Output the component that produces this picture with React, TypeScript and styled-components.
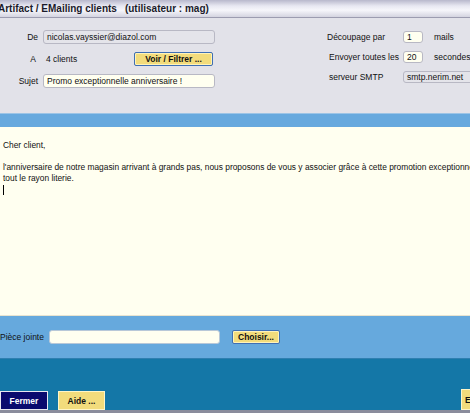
import React from "react";
import styled, { createGlobalStyle } from "styled-components";

const Global = createGlobalStyle`
  html, body {
    margin: 0;
    padding: 0;
    overflow: hidden;
  }
  body {
    font-family: "Liberation Sans", Arial, sans-serif;
    font-size: 8.5px;
    color: #111;
  }
`;

const Window = styled.div`
  width: 470px;
  height: 413px;
  display: flex;
  flex-direction: column;
  overflow: hidden;
  background: #e2e2e9;
`;

const TitleBar = styled.div`
  height: 18px;
  flex: none;
  box-sizing: border-box;
  display: flex;
  align-items: center;
  gap: 8px;
  margin-left: -2px;
  padding-bottom: 1px;
  font-size: 10px;
  font-weight: bold;
  color: #1a1a2a;
  background: linear-gradient(to bottom, #b8b8cc 0%, #e8e8f2 35%, #f6f6fb 60%, #d4d4e0 100%);
  border-bottom: 1px solid #9c9cb0;
`;

const FormPanel = styled.div`
  height: 95px;
  flex: none;
  box-sizing: border-box;
  display: flex;
  padding-top: 12px;
`;

const LeftGrid = styled.div`
  display: grid;
  grid-template-columns: 38px 172px;
  grid-auto-rows: 14px;
  row-gap: 8px;
  column-gap: 5px;
  align-items: center;
`;

const RightGrid = styled.div`
  margin-left: 112px;
  margin-top: 1px;
  display: grid;
  grid-template-columns: 76px 31px auto;
  grid-auto-rows: 12px;
  row-gap: 8px;
  align-items: center;
  white-space: nowrap;
`;

const Label = styled.span<{ $align?: "left" | "right"; $inset?: number }>`
  text-align: ${(p) => p.$align ?? "right"};
  padding-left: ${(p) => (p.$align === "left" ? p.$inset ?? 0 : 0)}px;
  padding-right: ${(p) => (p.$align !== "left" ? p.$inset ?? 0 : 0)}px;
  white-space: nowrap;
`;

const Field = styled.div<{ $tone: "gray" | "cream"; $w?: number }>`
  box-sizing: border-box;
  height: 100%;
  width: ${(p) => (p.$w ? `${p.$w}px` : "100%")};
  display: flex;
  align-items: center;
  padding: 0 3px;
  border: 1px solid #b8b8c4;
  border-radius: 3px;
  background: ${(p) => (p.$tone === "gray" ? "#e4e4ea" : "#fffff0")};
  white-space: nowrap;
  overflow: hidden;
`;

const RecipientRow = styled.div`
  display: flex;
  align-items: center;
  justify-content: space-between;
  padding-left: 3px;
  padding-right: 2px;
`;

const YellowButton = styled.button<{ $w: number; $h: number }>`
  box-sizing: border-box;
  width: ${(p) => p.$w}px;
  height: ${(p) => p.$h}px;
  padding: 0;
  font-family: inherit;
  font-size: 8.5px;
  font-weight: bold;
  color: #111;
  background: #f2dc7c;
  border: 1px solid #3f6fb4;
  border-radius: 2px;
  box-shadow: inset 0 0 0 1px #fff3b8;
  white-space: nowrap;
`;

const Band = styled.div`
  height: 13px;
  flex: none;
  background: #67a9de;
  border-top: 1px solid #9cc4e6;
`;

const Editor = styled.div`
  flex: 1;
  background: #fffff0;
  padding: 13px 0 0 3px;
  font-size: 8.4px;
  line-height: 11px;
  white-space: nowrap;
  overflow: hidden;
  border-bottom: 1px solid #e8e4d0;
`;

const Para = styled.p`
  margin: 0 0 11px;
`;

const Caret = styled.span`
  display: block;
  width: 1px;
  height: 10px;
  margin-top: 1px;
  background: #000;
`;

const AttachBar = styled.div`
  height: 43px;
  flex: none;
  box-sizing: border-box;
  display: flex;
  align-items: center;
  background: #66a9dd;
  border-bottom: 1px solid #2f7fb0;
`;

const AttachField = styled.div`
  box-sizing: border-box;
  width: 171px;
  height: 14px;
  margin-left: 5px;
  margin-right: 12px;
  background: #fffff0;
  border: 1px solid #b8c8d8;
  border-radius: 3px;
`;

const Footer = styled.div`
  height: 54px;
  flex: none;
  box-sizing: border-box;
  display: flex;
  align-items: flex-end;
  gap: 10px;
  background: #1477a7;
  border-bottom: 3px solid #8a8c9c;
`;

const FooterSpacer = styled.div`
  flex: 1;
`;

const NavyButton = styled.button`
  box-sizing: border-box;
  width: 48px;
  height: 19px;
  padding: 0;
  font-family: inherit;
  font-size: 8.5px;
  font-weight: bold;
  color: #fff;
  background: #0a0a6e;
  border: 1px solid #e8e8f0;
`;

const FooterYellow = styled(YellowButton)`
  border: 1px solid #fff6c8;
  border-radius: 0;
  box-shadow: none;
`;

const EdgeButton = styled(FooterYellow)`
  text-align: left;
  padding-left: 3px;
  margin-right: -51px;
`;

export default function App() {
  return (
    <>
      <Global />
      <Window>
        <TitleBar>
          <span>Artifact / EMailing clients</span>
          <span>(utilisateur : mag)</span>
        </TitleBar>

        <FormPanel>
          <LeftGrid>
            <Label>De</Label>
            <Field $tone="gray">nicolas.vayssier@diazol.com</Field>

            <Label $inset={2}>A</Label>
            <RecipientRow>
              <span>4 clients</span>
              <YellowButton $w={79} $h={14}>Voir / Filtrer ...</YellowButton>
            </RecipientRow>

            <Label>Sujet</Label>
            <Field $tone="cream">Promo exceptionnelle anniversaire !</Field>
          </LeftGrid>

          <RightGrid>
            <Label $align="left">Découpage par</Label>
            <Field $tone="cream" $w={20}>1</Field>
            <Label $align="left">mails</Label>

            <Label $align="left" $inset={2}>Envoyer toutes les</Label>
            <Field $tone="cream" $w={20}>20</Field>
            <Label $align="left">secondes</Label>

            <Label $align="left" $inset={2}>serveur SMTP</Label>
            <Field $tone="gray" $w={80} style={{ gridColumn: "2 / span 2" }}>
              smtp.nerim.net
            </Field>
          </RightGrid>
        </FormPanel>

        <Band />

        <Editor>
          <Para>Cher client,</Para>
          <div>
            l'anniversaire de notre magasin arrivant à grands pas, nous proposons de vous y associer grâce à cette promotion exceptionnelle sur
          </div>
          <div>tout le rayon literie.</div>
          <Caret />
        </Editor>

        <AttachBar>
          <span>Pièce jointe</span>
          <AttachField />
          <YellowButton $w={48} $h={14}>Choisir...</YellowButton>
        </AttachBar>

        <Footer>
          <NavyButton>Fermer</NavyButton>
          <FooterYellow $w={47} $h={19}>Aide ...</FooterYellow>
          <FooterSpacer />
          <EdgeButton $w={60} $h={21}>Envoyer</EdgeButton>
        </Footer>
      </Window>
    </>
  );
}
